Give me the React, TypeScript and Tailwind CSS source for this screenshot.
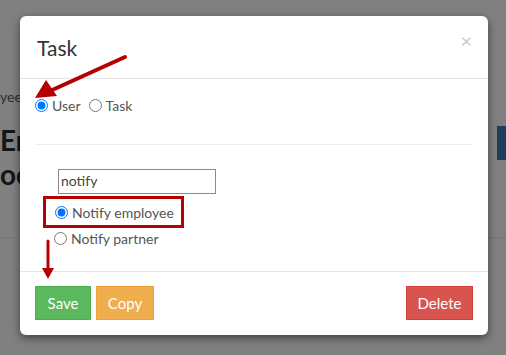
import React from "react";

export default function App() {
  return (
    <div className="relative w-[506px] h-[355px] overflow-hidden bg-[#808080] font-['Lato',sans-serif]">
      {/* background page (dimmed) */}
      <div className="flex flex-col pt-[88px]">
        <div className="text-[14px] leading-[18px] text-[#2e2e2e]">yee</div>
        <div className="mt-[17px] text-[28px] leading-[34px] font-bold text-[#151515]">Er</div>
        <div className="text-[28px] leading-[34px] font-bold text-[#151515]">oc</div>
        <div className="mt-[46px] h-px bg-[#767676]" />
      </div>
      <div className="absolute left-[497px] top-[126px] w-[12px] h-[34px] bg-[#1c3d5c]" />

      {/* modal */}
      <div className="absolute left-[20px] top-[16px] w-[468px] h-[319px] rounded-[6px] bg-white shadow-[0_3px_9px_rgba(0,0,0,0.5)] flex flex-col">
        <div className="h-[63px] border-b border-[#e5e5e5] flex items-center justify-between pl-[17px] pr-[16px]">
          <span className="text-[21px] text-[#333] pt-[2px]">Task</span>
          <span className="text-[20px] leading-none text-[#c8c8c8] -mt-[14px]">×</span>
        </div>
        <div className="flex-1 px-[15px] flex flex-col">
          <div className="mt-[17px] flex items-center text-[14px] text-[#555] h-[18px]">
            <label className="flex items-center">
              <input type="radio" name="a" defaultChecked className="w-[13px] h-[13px] m-0 mr-[4px]" />
              <span>User</span>
            </label>
            <label className="flex items-center ml-[8px]">
              <input type="radio" name="a" className="w-[13px] h-[13px] m-0 mr-[4px]" />
              <span>Task</span>
            </label>
          </div>
          <div className="mt-[30px] h-px bg-[#eeeeee]" />
          <div className="mt-[24px] ml-[23px] w-[158px] h-[25px] border border-[#8a8a8a] text-[14px] text-[#444] pl-[2px] leading-[22px]">notify</div>
          <div className="mt-[2px] ml-[8px] w-[141px] h-[32px] border-[3px] border-[#b40000] flex items-center pl-[9px] text-[14px] text-[#555]">
            <input type="radio" name="b" defaultChecked className="w-[13px] h-[13px] m-0 mr-[4px]" />
            <span>Notify employee</span>
          </div>
          <div className="mt-[1px] ml-[19px] flex items-center text-[14px] text-[#555] h-[18px]">
            <input type="radio" name="b" className="w-[13px] h-[13px] m-0 mr-[4px]" />
            <span>Notify partner</span>
          </div>
        </div>
        <div className="h-[64px] border-t border-[#e5e5e5] flex items-center px-[15px] pb-[1px]">
          <button className="h-[34px] w-[56px] bg-[#5cb85c] border border-[#4cae4c] text-white text-[15px]">Save</button>
          <button className="ml-[5px] h-[34px] w-[58px] bg-[#f0ad4e] border border-[#eea236] text-white text-[15px]">Copy</button>
          <div className="flex-1" />
          <button className="h-[34px] w-[67px] bg-[#d9534f] border border-[#d43f3a] text-white text-[15px]">Delete</button>
        </div>
      </div>

      {/* annotation arrows */}
      <svg className="absolute left-0 top-0 pointer-events-none" width="506" height="355">
        <line x1="125" y1="57" x2="50" y2="91" stroke="#b40000" strokeWidth="4" strokeLinecap="round" />
        <polygon points="35,98 46,80 57,96" fill="#b40000" />
        <line x1="48" y1="241" x2="48" y2="270" stroke="#b40000" strokeWidth="3" strokeLinecap="round" />
        <polygon points="42,268 54,268 48,279" fill="#b40000" />
      </svg>
    </div>
  );
}
